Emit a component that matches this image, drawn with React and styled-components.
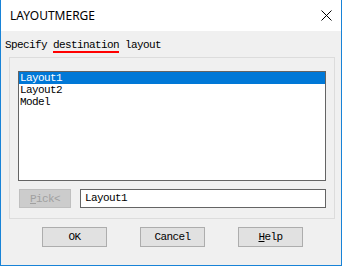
import styled, { createGlobalStyle } from "styled-components";

const GlobalStyle = createGlobalStyle`
  html, body { margin: 0; padding: 0; background: #ffffff; }
  * { box-sizing: border-box; }
`;

const mono = `"Liberation Mono", "DejaVu Sans Mono", monospace`;

const Window = styled.div`
  width: 342px;
  height: 266px;
  display: flex;
  flex-direction: column;
  border: 1px solid #1883d7;
  border-top: none;
  background: #f0f0f0;
`;

const TitleBar = styled.div`
  height: 31px;
  background: #ffffff;
  display: flex;
  align-items: center;
  justify-content: space-between;
  padding: 0 9px 1px 9px;
  font-family: "Noto Sans", "Open Sans", sans-serif;
  font-size: 12px;
  color: #000;
`;

const Close = styled.svg`
  width: 11px;
  height: 11px;
  margin-top: 1px;
`;

const Body = styled.div`
  flex: 1;
  display: flex;
  flex-direction: column;
  font-family: ${mono};
  font-size: 11px;
  letter-spacing: -0.6px;
  color: #000;
`;

const Prompt = styled.div`
  height: 14px;
  line-height: 14px;
  margin: 7px 0 5px 4px;
  white-space: pre;
`;

const Marked = styled.span`
  border-bottom: 2px solid #ff0000;
`;

const Group = styled.div`
  margin-left: 8px;
  width: 326px;
  height: 162px;
  border: 1px solid #dcdcdc;
  padding: 13px 8px 0 8px;
  display: flex;
  flex-direction: column;
  gap: 8px;
`;

const ListBox = styled.div`
  width: 308px;
  height: 110px;
  background: #ffffff;
  border: 1px solid #646464;
  display: flex;
  flex-direction: column;
`;

const Item = styled.div`
  height: 12px;
  line-height: 12px;
  padding-left: 1px;
  background: ${(p) => (p.$selected ? "#0078d7" : "transparent")};
  color: ${(p) => (p.$selected ? "#ffffff" : "#000000")};
`;

const PickRow = styled.div`
  display: flex;
  align-items: center;
  gap: 9px;
  padding-left: 1px;
`;

const PickButton = styled.div`
  width: 52px;
  height: 19px;
  background: #cccccc;
  border: 1px solid #bfbfbf;
  color: #a0a0a0;
  display: flex;
  align-items: center;
  justify-content: center;
`;

const Field = styled.div`
  width: 246px;
  height: 19px;
  background: #ffffff;
  border: 1px solid #646464;
  line-height: 17px;
  padding-left: 4px;
`;

const ButtonRow = styled.div`
  display: flex;
  gap: 33px;
  margin-top: 8px;
  padding-left: 41px;
`;

const Button = styled.div`
  width: 65px;
  height: 20px;
  background: #e1e1e1;
  border: 1px solid #adadad;
  display: flex;
  align-items: center;
  justify-content: center;
`;

const Key = styled.span`
  text-decoration: underline;
`;

export default function App() {
  return (
    <>
      <GlobalStyle />
      <Window>
        <TitleBar>
          <span>LAYOUTMERGE</span>
          <Close viewBox="0 0 11 11">
            <path d="M0.5 0.5 L10.5 10.5 M10.5 0.5 L0.5 10.5" stroke="#000" strokeWidth="1" fill="none" />
          </Close>
        </TitleBar>
        <Body>
          <Prompt>
            Specify <Marked>destination</Marked> layout
          </Prompt>
          <Group>
            <ListBox>
              <Item $selected>Layout1</Item>
              <Item>Layout2</Item>
              <Item>Model</Item>
            </ListBox>
            <PickRow>
              <PickButton>
                <span>
                  <Key>P</Key>ick&lt;
                </span>
              </PickButton>
              <Field>Layout1</Field>
            </PickRow>
          </Group>
          <ButtonRow>
            <Button>OK</Button>
            <Button>Cancel</Button>
            <Button>
              <span>
                <Key>H</Key>elp
              </span>
            </Button>
          </ButtonRow>
        </Body>
      </Window>
    </>
  );
}
